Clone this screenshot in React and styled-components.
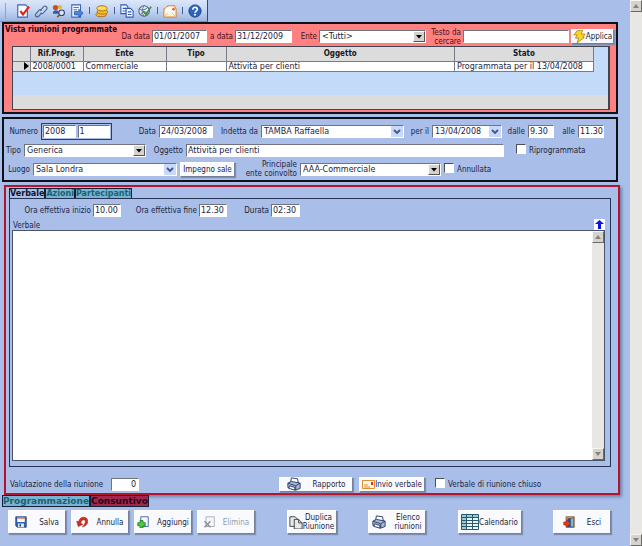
import React from 'react'
import styled, { createGlobalStyle, css } from 'styled-components'

const GlobalStyle = createGlobalStyle`
    * { box-sizing: border-box; }
    body {
        margin: 0;
        background: #a9bfe9;
        color: #1c2440;
        font-family: "DejaVu Sans Condensed", "DejaVu Sans", Verdana, sans-serif;
        font-size: 8px;
        line-height: 9px;
    }
    button, input, select, textarea { font: inherit; color: inherit; margin: 0; }
`

/* Page frame */
const Page = styled.div`
    display: flex;
    min-height: 100vh;
`
const Main = styled.main`
    flex: 1;
    min-width: 0;
    display: flex;
    flex-direction: column;
    padding-right: 12px;
`

/* Toolbar */
const Toolbar = styled.nav`
    display: flex;
    align-items: center;
    align-self: flex-start;
    gap: 4px;
    height: 22px;
    padding: 0 5px;
    background: linear-gradient(#dbe6f9, #c3d5f4 50%, #9db5de);
    border-right: 1px solid #38486c;
    border-bottom: 1px solid #7d93bd;
`
const Grip = styled.span`
    width: 1px;
    height: 16px;
    margin-right: 6px;
    background: #8ea4cf;
`
const Divider = styled.span`
    width: 1px;
    height: 7px;
    margin: 0 1px;
    background: #4c5f8a;
`
const ToolButton = styled.button`
    display: flex;
    padding: 0;
    border: 0;
    background: none;
`

/* Form parts */
const sunken = css`
    border: 1px solid #fff;
    border-top-color: #6f7480;
    border-left-color: #6f7480;
    border-radius: 0;
    background: #fff;
`
const Label = styled.label`
    text-align: ${p => (p.$left ? 'left' : 'right')};
    white-space: nowrap;
`
const Field = styled.input`
    ${sunken}
    width: 100%;
    min-width: 0;
    height: 13px;
    padding: 0 0 0 1px;
    font-family: "DejaVu Sans", Verdana, sans-serif;
    text-align: ${p => (p.$right ? 'right' : 'left')};
    outline: none;
`
const SelectBox = styled.div`
    position: relative;
    min-width: 0;
    select {
        ${sunken}
        display: block;
        appearance: none;
        width: 100%;
        height: 13px;
        padding: 0 12px 0 2px;
        font-family: "DejaVu Sans", Verdana, sans-serif;
        outline: none;
    }
    svg {
        position: absolute;
        top: 1px;
        right: 1px;
        pointer-events: none;
        background: ${p => (p.$flat ? '#c9d8f8' : '#d6d3cc')};
        border: 1px solid ${p => (p.$flat ? '#c9d8f8' : '#fff')};
        border-right-color: ${p => (p.$flat ? '#c9d8f8' : '#55534f')};
        border-bottom-color: ${p => (p.$flat ? '#c9d8f8' : '#55534f')};
    }
`
const Check = styled.label`
    display: flex;
    align-items: center;
    gap: 3px;
    white-space: nowrap;
    input {
        appearance: none;
        width: 10px;
        height: 10px;
        margin-bottom: 3px;
        background: #fff;
        border: 1px solid #fff;
        border-top-color: #4b4f58;
        border-left-color: #4b4f58;
    }
    input:checked { background: #1c2440; }
`
const PushButton = styled.button`
    display: flex;
    align-items: center;
    justify-content: center;
    gap: ${p => p.$gap || 0}px;
    width: ${p => (p.$w ? p.$w + 'px' : 'auto')};
    height: ${p => (p.$tall ? 24 : 15)}px;
    padding: 0;
    white-space: nowrap;
    background: #f8fafe;
    border: 1px solid #fff;
    border-right-color: #77819a;
    border-bottom-color: #77819a;
    box-shadow: 1px 1px 1px #7f8eb2;
    &:disabled { color: #9a9da6; }
    svg { flex: none; }
`

/* Meetings list */
const ListPanel = styled.section`
    margin-left: 2px;
    padding: 3px 6px 2px 8px;
    background: #ff8080;
    border: 2px solid #101018;
`
const FilterRow = styled.div`
    display: grid;
    grid-template-columns: 108px 36px 55px 24px 57px 23px 107px 33px 1fr 43px;
    column-gap: 2px;
    align-items: center;
    height: 19px;
    margin: 0 -4px 0 -8px;
    color: #4a1020;
    input, select, button { color: #1c2440; }
`
const Title = styled.h2`
    align-self: start;
    margin: -2px 0 0 1px;
    font-size: 8px;
    line-height: 9px;
    white-space: nowrap;
    color: #14060c;
`
const GridFrame = styled.div`
    height: 64px;
    padding-right: 14px;
    background: linear-gradient(#c3daf9 48px, #dcdcdc 48px);
    border: 1px solid #3f4450;
    border-right-width: 2px;
`
const Grid = styled.table`
    width: 100%;
    table-layout: fixed;
    border-collapse: collapse;
    th, td {
        padding: 0 2px;
        overflow: hidden;
        white-space: nowrap;
        border-right: 1px solid #777c86;
        border-bottom: 1px solid #777c86;
    }
    th { height: 14px; background: #dcdcdc; color: #16181f; }
    td {
        height: 10px;
        line-height: 9px;
        background: #fff;
        font-family: "DejaVu Sans", Verdana, sans-serif;
    }
    td:first-child { padding: 0 1px 0 0; background: #dcdcdc; }
    td svg { display: block; margin-left: auto; }
`

/* Meeting header form */
const FormPanel = styled.section`
    display: flex;
    flex-direction: column;
    gap: 1px;
    margin: 3px 0 0 2px;
    padding: 3px 12px 2px 0;
    border: 2px solid #101018;
`
const FormRow = styled.div`
    display: grid;
    grid-template-columns: ${p => p.$cols};
    column-gap: 3px;
    align-items: center;
    min-height: 18px;
`
const NumberBox = styled.div`
    display: grid;
    grid-template-columns: 1fr 1fr;
    gap: 2px;
    padding: 1px;
    border: 1px solid #2d3c62;
`

/* Minutes */
const MinutesPanel = styled.section`
    flex: 1;
    display: flex;
    flex-direction: column;
    margin: 3px -2px 0 4px;
    padding: 1px 7px 0 3px;
    border: 2px solid #b5152b;
    box-shadow: 2px 2px 3px #6f80aa;
`
const Tabs = styled.div`
    display: flex;
`
const BottomTabs = styled(Tabs)`
    padding-left: 2px;
`
const Tab = styled.button`
    height: 10px;
    padding: 0;
    font-weight: bold;
    line-height: 9px;
    font-family: "DejaVu Sans", Verdana, sans-serif;
    color: ${p => (p.$active ? '#10131f' : '#1c5f72')};
    background: ${p => (p.$active ? '#a9bfe9' : '#76b4d2')};
    border: 1px solid #152038;
    border-bottom-width: 0;
`
const BottomTab = styled(Tab)`
    height: 12px;
    font-size: 9px;
    color: ${p => (p.$active ? '#2a0412' : '#1c5f72')};
    background: ${p => (p.$active ? '#a02850' : '#76b4d2')};
    border-bottom-width: 1px;
`
const MinutesBody = styled.div`
    flex: 1;
    display: flex;
    flex-direction: column;
    padding: 4px 5px 5px 2px;
    border: 1px solid #253252;
`
const TimeRow = styled.div`
    display: grid;
    grid-template-columns: 79px 28px 74px 28px 40px 29px;
    column-gap: 2px;
    align-items: center;
    height: 14px;
`
const TextHead = styled.div`
    display: flex;
    justify-content: space-between;
    align-items: flex-end;
    height: 13px;
    padding-left: 1px;
`
const UpButton = styled.button`
    display: flex;
    padding: 1px;
    background: #fff;
    border: 0;
`
const TextFrame = styled.div`
    flex: 1;
    display: flex;
    border: 1px solid #4b5468;
    background: #fff;
    textarea {
        flex: 1;
        min-height: 120px;
        padding: 2px;
        border: 0;
        resize: none;
        outline: none;
        background: #fff;
    }
`
const MinutesFoot = styled.div`
    display: flex;
    align-items: center;
    height: 26px;
    padding: 8px 0 0 1px;
`
const Score = styled.div`
    display: flex;
    align-items: center;
    gap: 8px;
    margin-right: auto;
    input { width: 28px; padding-right: 2px; }
`
const FootActions = styled.div`
    display: flex;
    align-items: center;
    gap: 6px;
    width: 332px;
    ${Check} { margin-left: 4px; }
`

/* Bottom commands */
const Commands = styled.div`
    display: flex;
    justify-content: space-between;
    padding: 3px 7px 12px 8px;
`
const Group = styled.div`
    display: flex;
    gap: 5px;
`

/* Scrollbars */
const Scroll = styled.div`
    display: flex;
    flex-direction: column;
    justify-content: space-between;
    width: 12px;
    background: #e8e7e3;
    button {
        display: flex;
        align-items: center;
        justify-content: center;
        height: 12px;
        padding: 0;
        background: #d6d3cc;
        border: 1px solid #f6f5f2;
        border-right-color: #6b6964;
        border-bottom-color: #6b6964;
    }
`

function ScrollBar() {
	return <Scroll>
		<button aria-label="Su"><svg width="6" height="4"><path d="M0 4L3 0L6 4z" fill="#85827b" /></svg></button>
		<button aria-label="Giù"><svg width="6" height="4"><path d="M0 0L3 4L6 0z" fill="#85827b" /></svg></button>
	</Scroll>
}

function Select({ id, value, flat }) {
	return <SelectBox $flat={flat}>
		<select id={id} defaultValue={value}><option>{value}</option></select>
		<svg width="12" height="11" viewBox="0 0 10 9">
			{flat
				? <path d="M2 3L5 6L8 3" fill="none" stroke="#3f568c" strokeWidth="1.8" />
				: <path d="M2 3h6L5 6.500z" fill="#000" />}
		</svg>
	</SelectBox>
}

/* Small drawings, all on a 16 unit grid */
const drawings = {
	check: <>
		<path d="M2 1h9l2 2v12H2z" fill="#f8fbff" stroke="#3e62b5" strokeWidth="1.300" />
		<path d="M5 8l3 4l7-9" fill="none" stroke="#e02818" strokeWidth="2.400" />
	</>,
	clip: <g fill="none" stroke="#51648f" strokeWidth="1.300">
		<path d="M7 8l4-5c1.500-2 5 .5 3.500 2.800L11 10c-1.200 1.500-3 1-3.500 0" />
		<path d="M9 7c-1-1-2.500-1-3.500.3L2 11.500c-1.500 2 1.500 4.500 3.300 2.500L8 11" />
	</g>,
	people: <>
		<circle cx="4" cy="4" r="3" fill="#d5481f" />
		<circle cx="9" cy="3.500" r="2.300" fill="#e9b230" />
		<path d="M1 11c0-5 7-5 7 0z" fill="#2f58b0" />
		<circle cx="11" cy="10" r="3.200" fill="#dceafd" stroke="#33446f" strokeWidth="1.300" />
		<path d="M9 12l-3 3" stroke="#a34a24" strokeWidth="2" />
	</>,
	send: <>
		<path d="M2 1h10v14H2z" fill="#f4f8ff" stroke="#3e62b5" strokeWidth="1.200" />
		<path d="M4 4h6M4 6.500h4" stroke="#3e62b5" />
		<path d="M5 8.500h5V6l5 4.500L10 15v-2.500H5z" fill="#4a86e0" stroke="#234b9c" strokeWidth=".8" />
	</>,
	coins: <g fill="#f8bf2c" stroke="#a86508">
		<ellipse cx="7" cy="12" rx="6" ry="2.500" />
		<ellipse cx="8.500" cy="9" rx="6" ry="2.500" />
		<ellipse cx="8" cy="5" rx="6" ry="3" fill="#ffdc5c" />
	</g>,
	copy: <g fill="#f4f8ff" stroke="#2e58b4" strokeWidth="1.200">
		<path d="M1 1h6l2 2v8H1z" />
		<path d="M3 5h4M3 8h4" />
		<path d="M7 5h5l3 3v7H7z" />
		<path d="M9 9h4M9 12h4" />
	</g>,
	globe: <>
		<circle cx="7" cy="8" r="6" fill="#e2ecf6" stroke="#50617e" strokeWidth="1.200" />
		<path d="M2 6c3 2 7 0 9-2M3 12c3-4 7-3 9-1M7 2c-3 4-3 8 0 12" fill="none" stroke="#50617e" />
		<path d="M6 8l3 4l6-9" fill="none" stroke="#459147" strokeWidth="2" />
	</>,
	mail: <>
		<path d="M1 6l5-4h7l2 4v9H1z" fill="#fff3dc" stroke="#db8634" strokeWidth="1.200" />
		<path d="M3 4h9v6H3z" fill="#fff" />
		<path d="M1 15l5-5M15 15l-5-5" fill="none" stroke="#e9b67c" />
		<circle cx="12" cy="6" r="1.500" fill="#e65528" />
	</>,
	help: <>
		<circle cx="8" cy="8" r="7" fill="#2b65bd" stroke="#1b3d7c" />
		<path d="M5.500 6.500c0-4 5.500-3.500 5 0c-.3 1.500-2.500 1.800-2.500 3.500" fill="none" stroke="#fff" strokeWidth="1.900" />
		<circle cx="8" cy="12.300" r="1.200" fill="#fff" />
	</>,
	bolt: <path d="M5 1l7-1l-2 5h5l-3 4h2L5 16l2-6H3l2-4H1z" fill="#fbd51f" stroke="#a07c12" strokeWidth=".9" />,
	disk: <>
		<path d="M1 1h14v14H3l-2-2z" fill="#2f63b4" stroke="#1d3f7a" />
		<path d="M3 2h10v6H3z" fill="#fff" />
		<path d="M3 2h10v1.500H3z" fill="#e0502c" />
		<path d="M4 10h8v5H4z" fill="#dfe5ee" />
		<path d="M6 11h2v3H6z" fill="#243a68" />
	</>,
	undo: <path d="M1 7l2 7l6-3l-2.500-1C6 5 12 3 12.500 7c.2 3-1.500 5-4 7.500c5-1 7.500-4.500 7-8.500C14.500 0 5 0 3.500 7.800z" fill="#d62f1c" stroke="#98190e" strokeWidth=".8" />,
	add: <>
		<path d="M5 1h10v13H5z" fill="#f5f9ff" stroke="#3a60a8" strokeWidth="1.200" />
		<path d="M4 6h4v3h3v4H8v3H4v-3H1V9h3z" fill="#4ecb3a" stroke="#14761a" />
	</>,
	remove: <>
		<path d="M4 1h11v13H4z" fill="#f6f7fa" stroke="#a5abb8" strokeWidth="1.200" />
		<path d="M2 7l8 8M10 7l-8 8" stroke="#8f949e" strokeWidth="2.200" />
	</>,
	pages: <g fill="#e9e9e9" stroke="#33343a">
		<path d="M1 2h6l3 3v8H1z" />
		<path d="M6 5h5l4 4v7H6z" />
		<path d="M11 5v4h4" fill="none" />
	</g>,
	printer: <g stroke="#2f406c" strokeWidth="1.100">
		<path d="M4 7l1-6l7 1l1 5z" fill="#fff" />
		<path d="M1 7l4-2l10 2v6l-5 2l-9-3z" fill="#a9b8d8" />
		<path d="M1 7l9 3l5-3M10 10v5" fill="none" />
		<path d="M3 10l6 2v3l-7-2z" fill="#f3f6fd" />
	</g>,
	door: <>
		<path d="M4 1h11v14H4z" fill="#efa154" stroke="#824b1c" />
		<path d="M6 3h7v12H6z" fill="#2b4f80" />
		<path d="M10 4l4-2v13l-4-1z" fill="#76b7dc" stroke="#26527a" strokeWidth=".7" />
		<path d="M1 8h4V5l5 5l-5 5v-3H1z" fill="#e83a20" stroke="#8d1a0c" strokeWidth=".8" />
	</>,
}

function Icon({ name, size = 14 }) {
	return <svg width={size} height={size} viewBox="0 0 16 16" aria-hidden="true">{drawings[name]}</svg>
}

function EnvelopeIcon() {
	return <svg width="13" height="9" viewBox="0 0 13 9" aria-hidden="true">
		<path d="M.5.500h12v8H.5z" fill="#fff7e8" stroke="#e08d2e" />
		<path d="M2 5h4M2 7h6" stroke="#e08d2e" />
		<path d="M9 2h2v3H9z" fill="#dc2d18" />
	</svg>
}

function CalendarIcon() {
	return <svg width="18" height="16" viewBox="0 0 18 16" aria-hidden="true">
		<path d="M.5.500h17v15H.5z" fill="#e9f5f6" />
		<path d="M1 1h16v2H1zM1 1h4v14H1z" fill="#9cc8d8" />
		<path d="M.5.500h17v15H.5zM5.500.500v15M11.500.500v15M.5 3.500h17M.5 6.500h17M.5 9.500h17M.5 12.500h17" fill="none" stroke="#285a6c" />
	</svg>
}

const tools = [
	['check', 'Attività'], ['clip', 'Allegati'], ['people', 'Cerca persone'], ['send', 'Invia'], null,
	['coins', 'Costi'], null,
	['copy', 'Copia'], ['globe', 'Verifica'], null,
	['mail', 'Posta'], null,
	['help', 'Aiuto'],
]

function MeetingList() {
	return <ListPanel>
		<FilterRow>
			<Title>Vista riunioni programmate</Title>
			<Label htmlFor="from">Da data</Label>
			<Field id="from" defaultValue="01/01/2007" />
			<Label htmlFor="to">a data</Label>
			<Field id="to" defaultValue="31/12/2009" />
			<Label htmlFor="body">Ente</Label>
			<Select id="body" value="<Tutti>" />
			<Label htmlFor="search">Testo da<br />cercare</Label>
			<Field id="search" />
			<PushButton><Icon name="bolt" size={13} />Applica</PushButton>
		</FilterRow>
		<GridFrame>
			<Grid>
				<colgroup>
					<col width="17" /><col width="53" /><col width="83" /><col width="60" /><col /><col width="139" />
				</colgroup>
				<thead>
					<tr><th></th><th>Rif.Progr.</th><th>Ente</th><th>Tipo</th><th>Oggetto</th><th>Stato</th></tr>
				</thead>
				<tbody>
					<tr>
						<td><svg width="5" height="8"><path d="M0 0L5 4L0 8z" /></svg></td>
						<td>2008/0001</td>
						<td>Commerciale</td>
						<td></td>
						<td>Attività per clienti</td>
						<td>Programmata per il 13/04/2008</td>
					</tr>
				</tbody>
			</Grid>
		</GridFrame>
	</ListPanel>
}

function MeetingForm() {
	return <FormPanel>
		<FormRow $cols="34px 71px 41px 54px 42px 1fr 22px 70px 20px 26px 18px 26px">
			<Label htmlFor="year">Numero</Label>
			<NumberBox>
				<Field id="year" defaultValue="2008" />
				<Field aria-label="Progressivo" defaultValue="1" />
			</NumberBox>
			<Label htmlFor="date">Data</Label>
			<Field id="date" defaultValue="24/03/2008" />
			<Label htmlFor="owner">Indetta da</Label>
			<Select id="owner" flat value="TAMBA Raffaella" />
			<Label htmlFor="day">per il</Label>
			<Select id="day" flat value="13/04/2008" />
			<Label htmlFor="start">dalle</Label>
			<Field id="start" defaultValue="9.30" />
			<Label htmlFor="end">alle</Label>
			<Field id="end" defaultValue="11.30" />
		</FormRow>
		<FormRow $cols="17px 122px 34px 1fr 6px 88px">
			<Label htmlFor="kind">Tipo</Label>
			<Select id="kind" value="Generica" />
			<Label htmlFor="subject">Oggetto</Label>
			<Field id="subject" defaultValue="Attività per clienti" />
			<span />
			<Check><input type="checkbox" />Riprogrammata</Check>
		</FormRow>
		<FormRow $cols="26px 144px 55px 59px 1fr 160px">
			<Label htmlFor="place">Luogo</Label>
			<Select id="place" flat value="Sala Londra" />
			<PushButton>Impegno sale</PushButton>
			<Label htmlFor="main">Principale<br />ente coinvolto</Label>
			<Select id="main" value="AAA-Commerciale" />
			<Check><input type="checkbox" />Annullata</Check>
		</FormRow>
	</FormPanel>
}

function Minutes() {
	return <MinutesPanel>
		<Tabs role="tablist">
			<Tab role="tab" aria-selected="true" $active>Verbale</Tab>
			<Tab role="tab" aria-selected="false">Azioni</Tab>
			<Tab role="tab" aria-selected="false">Partecipanti</Tab>
		</Tabs>
		<MinutesBody>
			<TimeRow>
				<Label htmlFor="realStart">Ora effettiva inizio</Label>
				<Field id="realStart" defaultValue="10.00" />
				<Label htmlFor="realEnd">Ora effettiva fine</Label>
				<Field id="realEnd" defaultValue="12.30" />
				<Label htmlFor="length">Durata</Label>
				<Field id="length" defaultValue="02:30" />
			</TimeRow>
			<TextHead>
				<Label htmlFor="minutes" $left>Verbale</Label>
				<UpButton aria-label="Espandi">
					<svg width="9" height="9"><path d="M4.500 0L9 4H6v5H3V4H0z" fill="#0a14e0" /></svg>
				</UpButton>
			</TextHead>
			<TextFrame>
				<textarea id="minutes" />
				<ScrollBar />
			</TextFrame>
		</MinutesBody>
		<MinutesFoot>
			<Score>
				<Label htmlFor="score">Valutazione della riunione</Label>
				<Field id="score" $right defaultValue="0" />
			</Score>
			<FootActions>
				<PushButton $w={74} $gap={12}><Icon name="printer" />Rapporto</PushButton>
				<PushButton $w={66}><EnvelopeIcon />Invio verbale</PushButton>
				<Check><input type="checkbox" />Verbale di riunione chiuso</Check>
			</FootActions>
		</MinutesFoot>
	</MinutesPanel>
}

function App() {
	return <Page>
		<GlobalStyle />
		<Main>
			<Toolbar>
				<Grip />
				{tools.map((tool, i) => tool
					? <ToolButton key={i} aria-label={tool[1]}><Icon name={tool[0]} /></ToolButton>
					: <Divider key={i} />)}
			</Toolbar>
			<MeetingList />
			<MeetingForm />
			<Minutes />
			<BottomTabs role="tablist">
				<BottomTab role="tab" aria-selected="false">Programmazione</BottomTab>
				<BottomTab role="tab" aria-selected="true" $active>Consuntivo</BottomTab>
			</BottomTabs>
			<Commands>
				<Group>
					<PushButton $tall $w={58} $gap={12}><Icon name="disk" size={12} />Salva</PushButton>
					<PushButton $tall $w={58} $gap={8}><Icon name="undo" size={12} />Annulla</PushButton>
					<PushButton $tall $w={58} $gap={8}><Icon name="add" size={12} />Aggiungi</PushButton>
					<PushButton $tall $w={58} $gap={8} disabled><Icon name="remove" size={12} />Elimina</PushButton>
				</Group>
				<PushButton $tall $w={50}><Icon name="pages" /><span>Duplica<br />Riunione</span></PushButton>
				<PushButton $tall $w={58} $gap={8}><Icon name="printer" /><span>Elenco<br />riunioni</span></PushButton>
				<PushButton $tall $w={64}><CalendarIcon />Calendario</PushButton>
				<PushButton $tall $w={58} $gap={12}><Icon name="door" size={12} />Esci</PushButton>
			</Commands>
		</Main>
		<ScrollBar />
	</Page>
}

export default App
